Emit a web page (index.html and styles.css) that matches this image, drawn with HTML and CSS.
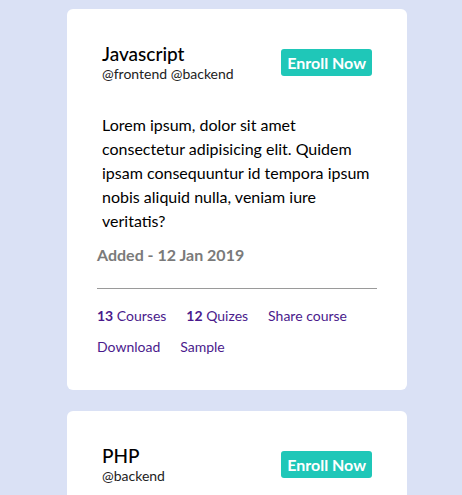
FILE: index.html
```html
<!DOCTYPE html>
<html>
<head>
<meta charset="utf-8">
<link rel="stylesheet" href="styles.css">
</head>
<body>
<div class="list">
  <div class="card">
    <div class="head">
      <div class="titles">
        <h2 class="title">Javascript</h2>
        <div class="tags">@frontend @backend</div>
      </div>
      <a class="btn">Enroll Now</a>
    </div>
    <p class="desc">Lorem ipsum, dolor sit amet consectetur adipisicing elit. Quidem ipsam consequuntur id tempora ipsum nobis aliquid nulla, veniam iure veritatis?</p>
    <div class="added">Added - 12 Jan 2019</div>
    <hr class="rule">
    <div class="links">
      <a class="link"><b>13</b> Courses</a>
      <a class="link"><b>12</b> Quizes</a>
      <a class="link">Share course</a>
      <a class="link">Download</a>
      <a class="link">Sample</a>
    </div>
  </div>
  <div class="card">
    <div class="head">
      <div class="titles">
        <h2 class="title">PHP</h2>
        <div class="tags">@backend</div>
      </div>
      <a class="btn">Enroll Now</a>
    </div>
  </div>
</div>
</body>
</html>
```
FILE: styles.css
```css
html, body {
  margin: 0;
  padding: 0;
}
body {
  background: #dae1f5;
  font-family: Lato, "Open Sans", sans-serif;
  color: #000;
}
.list {
  padding: 9px 0 0 67px;
  display: flex;
  flex-direction: column;
  gap: 21px;
}
.card {
  width: 340px;
  box-sizing: border-box;
  background: #fff;
  border-radius: 6px;
  padding: 33px 30px 28px;
}
.head {
  display: flex;
  justify-content: space-between;
  align-items: center;
  padding: 0 5px;
}
.title {
  margin: 0;
  font-size: 19px;
  font-weight: 500;
  line-height: 24px;
}
.tags {
  font-size: 14px;
  line-height: 16px;
  color: #222;
}
.btn {
  background: #1fc7b8;
  color: #fff;
  font-weight: 700;
  font-size: 16px;
  line-height: 27px;
  padding: 0 6px;
  border-radius: 3px;
}
.desc {
  margin: 31px 0 0;
  padding: 0 5px;
  font-size: 16px;
  line-height: 24px;
}
.added {
  margin-top: 12px;
  font-size: 16px;
  font-weight: 700;
  color: #7a7a7a;
}
.rule {
  margin: 24px 0 0;
  border: 0;
  border-top: 1px solid #9a9a9a;
}
.links {
  display: flex;
  flex-wrap: wrap;
  column-gap: 20px;
  padding-top: 11px;
}
.link {
  font-size: 14px;
  line-height: 31px;
  color: #4a1a8c;
}
.link b {
  font-weight: 700;
}
```
